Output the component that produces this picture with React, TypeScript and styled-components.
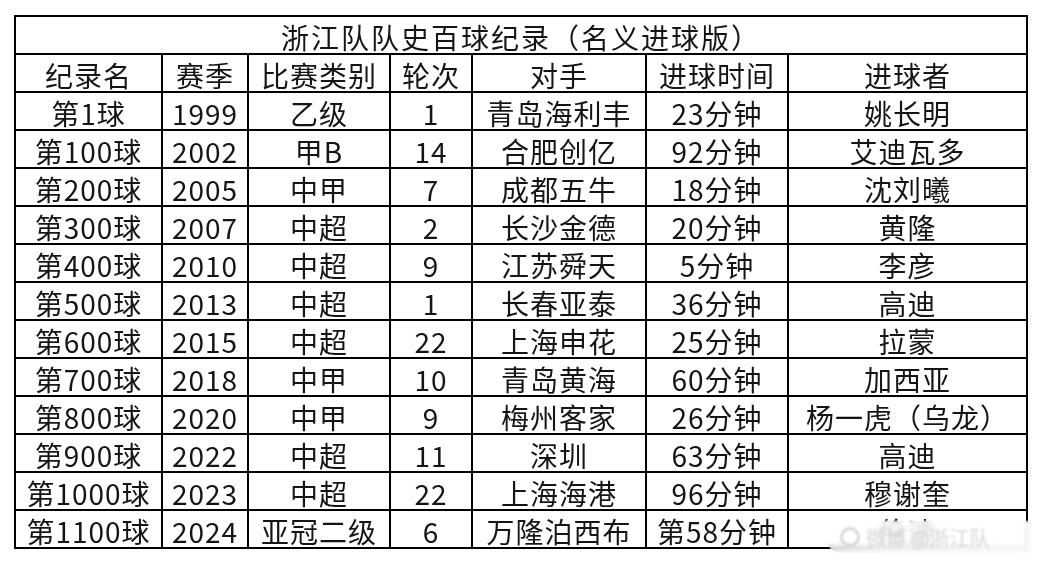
import styled, { createGlobalStyle } from "styled-components";

const GlobalStyle = createGlobalStyle`
  body {
    margin: 0;
    background: #ffffff;
    font-family: "Noto Sans CJK SC", "Noto Sans", sans-serif;
  }
`;

const Page = styled.div`
  width: 1044px;
  height: 564px;
  padding: 15px 0 0 14px;
  box-sizing: border-box;
  position: relative;
`;

const Sheet = styled.div`
  display: grid;
  grid-template-columns: 145px 84px 140px 80px 172px 140px 237px;
  grid-auto-rows: 36px;
  gap: 2px;
  padding: 2px;
  width: max-content;
  background: #000;
`;

const Cell = styled.div<{ $span?: number }>`
  grid-column: ${(p) => (p.$span ? `span ${p.$span}` : "auto")};
  background: #fff;
  color: #151515;
  font-size: 28px;
  line-height: 36px;
  padding-top: 2px;
  box-sizing: border-box;
  letter-spacing: 1px;
  text-align: center;
  white-space: nowrap;
`;

const Title = styled(Cell)`
  letter-spacing: 2px;
`;

const Watermark = styled.div`
  position: absolute;
  left: 826px;
  top: 521px;
  width: 214px;
  height: 32px;
  border-radius: 16px;
  background: linear-gradient(
    to right,
    rgba(255, 255, 255, 0.5),
    rgba(255, 255, 255, 0.8) 25%,
    rgba(255, 255, 255, 0.9)
  );
  backdrop-filter: blur(2px);
  display: flex;
  align-items: center;
  padding-left: 14px;
  gap: 6px;
  box-sizing: border-box;
  color: rgba(200, 200, 200, 0.75);
  font-size: 20px;
  filter: blur(1.2px);
`;

const Dot = styled.span`
  width: 20px;
  height: 20px;
  border-radius: 50%;
  border: 3px solid rgba(205, 205, 205, 0.8);
  box-sizing: border-box;
`;

const headers = ["纪录名", "赛季", "比赛类别", "轮次", "对手", "进球时间", "进球者"];

const rows: string[][] = [
  ["第1球", "1999", "乙级", "1", "青岛海利丰", "23分钟", "姚长明"],
  ["第100球", "2002", "甲B", "14", "合肥创亿", "92分钟", "艾迪瓦多"],
  ["第200球", "2005", "中甲", "7", "成都五牛", "18分钟", "沈刘曦"],
  ["第300球", "2007", "中超", "2", "长沙金德", "20分钟", "黄隆"],
  ["第400球", "2010", "中超", "9", "江苏舜天", "5分钟", "李彦"],
  ["第500球", "2013", "中超", "1", "长春亚泰", "36分钟", "高迪"],
  ["第600球", "2015", "中超", "22", "上海申花", "25分钟", "拉蒙"],
  ["第700球", "2018", "中甲", "10", "青岛黄海", "60分钟", "加西亚"],
  ["第800球", "2020", "中甲", "9", "梅州客家", "26分钟", "杨一虎（乌龙）"],
  ["第900球", "2022", "中超", "11", "深圳", "63分钟", "高迪"],
  ["第1000球", "2023", "中超", "22", "上海海港", "96分钟", "穆谢奎"],
  ["第1100球", "2024", "亚冠二级", "6", "万隆泊西布", "第58分钟", "伦迪"],
];

export default function App() {
  return (
    <>
      <GlobalStyle />
      <Page>
        <Sheet>
          <Title $span={7}>浙江队队史百球纪录（名义进球版）</Title>
          {headers.map((h) => (
            <Cell key={h}>{h}</Cell>
          ))}
          {rows.map((r) =>
            r.map((c, i) => <Cell key={r[0] + i}>{c}</Cell>)
          )}
        </Sheet>
        <Watermark>
          <Dot />
          <span>微博 @浙江队</span>
        </Watermark>
      </Page>
    </>
  );
}
